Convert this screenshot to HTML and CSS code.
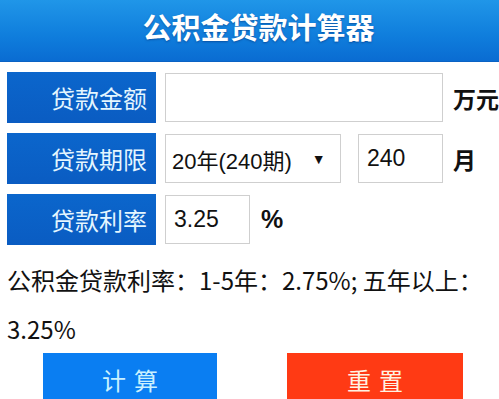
FILE: index.html
```html
<!DOCTYPE html>
<html lang="zh-CN">
<head>
<meta charset="utf-8">
<title>公积金贷款计算器</title>
<link rel="stylesheet" href="styles.css">
</head>
<body>
<header class="top">公积金贷款计算器</header>
<main class="form">
  <div class="row">
    <div class="label">贷款金额</div>
    <input class="field field-wide" type="text" value="">
    <span class="unit">万元</span>
  </div>
  <div class="row">
    <div class="label">贷款期限</div>
    <div class="field select"><span class="sel-text">20年(240期)</span><span class="arrow">▼</span></div>
    <input class="field field-small field-gap" type="text" value="240">
    <span class="unit">月</span>
  </div>
  <div class="row">
    <div class="label">贷款利率</div>
    <input class="field field-small" type="text" value="3.25">
    <span class="unit unit-pct">%</span>
  </div>
  <p class="note">公积金贷款利率：1-5年：2.75%; 五年以上：3.25%</p>
  <div class="buttons">
    <button class="btn btn-calc" type="button">计算</button>
    <button class="btn btn-reset" type="button">重置</button>
  </div>
</main>
</body>
</html>
```
FILE: styles.css
```css
html, body {
  margin: 0;
  padding: 0;
  background: #ffffff;
  overflow: hidden;
}
body {
  font-family: "Noto Sans CJK SC", "Liberation Sans", sans-serif;
  color: #111;
}
.top {
  height: 62px;
  box-sizing: border-box;
  padding-top: 8px;
  padding-left: 18px;
  line-height: 36px;
  text-align: center;
  font-size: 29px;
  font-weight: 700;
  color: #ffffff;
  text-shadow: 0 1px 2px rgba(0, 40, 110, 0.5);
  background: linear-gradient(to bottom, #2096e8 0%, #0f7ddc 60%, #0a6cd2 100%);
  border-bottom: 1px solid #0a62c4;
}
.form {
  padding: 10px 0 0 7px;
}
.row {
  display: flex;
  align-items: center;
  height: 51px;
  margin-bottom: 10px;
}
.label {
  width: 149px;
  height: 51px;
  box-sizing: border-box;
  padding-right: 9px;
  text-align: right;
  line-height: 51px;
  font-size: 24px;
  color: #e4f6ff;
  background: linear-gradient(to bottom, #0b66cc, #0a5cc2);
  flex: none;
}
.field {
  box-sizing: border-box;
  height: 49px;
  margin-left: 9px;
  border: 1px solid #cfcfcf;
  background: #fff;
  font-family: "Liberation Sans", "Noto Sans CJK SC", sans-serif;
  font-size: 23px;
  color: #111;
  padding: 0 0 0 8px;
  outline: none;
  flex: none;
}
.field-wide {
  width: 278px;
}
.field-small {
  width: 85px;
}
.field-gap {
  margin-left: 17px;
}
.select {
  width: 176px;
  display: flex;
  align-items: center;
  padding-left: 6px;
}
.sel-text {
  font-size: 22px;
}
.arrow {
  font-size: 14px;
  margin-left: 20px;
}
.unit {
  margin-left: 10px;
  font-size: 23px;
  font-weight: 700;
  color: #111;
}
.unit-pct {
  font-family: "Liberation Sans", sans-serif;
  font-size: 25px;
  margin-left: 11px;
}
.note {
  margin: 5px 0 0 0;
  font-size: 24px;
  line-height: 49px;
  color: #111;
}
.buttons {
  display: flex;
  padding-left: 36px;
}
.btn {
  height: 52px;
  border: none;
  font-family: "Noto Sans CJK SC", sans-serif;
  font-size: 24px;
  letter-spacing: 8px;
  padding: 0 0 0 8px;
}
.btn-calc {
  width: 174px;
  background: #0a7ef2;
  color: #c9f1ff;
}
.btn-reset {
  width: 176px;
  margin-left: 70px;
  background: #ff3a14;
  color: #fff2e2;
}
```
